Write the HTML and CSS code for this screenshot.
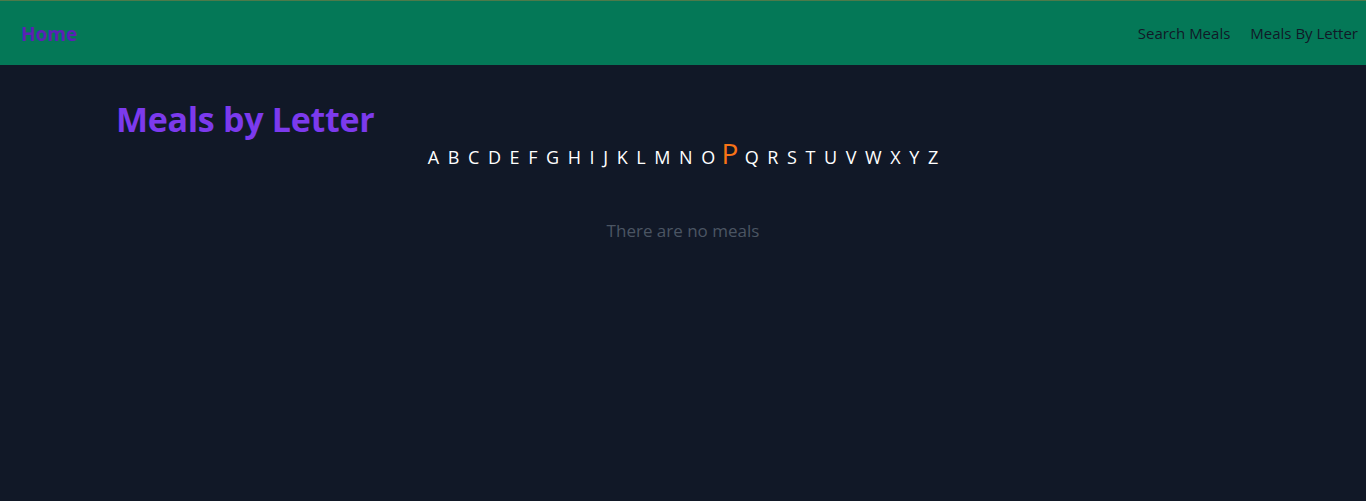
FILE: index.html
```html
<!DOCTYPE html>
<html lang="en">
<head>
<meta charset="utf-8">
<title>Meals by Letter</title>
<link rel="stylesheet" href="styles.css">
</head>
<body>
<header class="topbar">
  <a class="home" href="#">Home</a>
  <nav class="nav">
    <a href="#">Search Meals</a>
    <a href="#">Meals By Letter</a>
  </nav>
</header>
<main class="content">
  <h1 class="title">Meals by Letter</h1>
  <div class="letters">
    <a href="#">A</a><a href="#">B</a><a href="#">C</a><a href="#">D</a><a href="#">E</a><a href="#">F</a><a href="#">G</a><a href="#">H</a><a href="#">I</a><a href="#">J</a><a href="#">K</a><a href="#">L</a><a href="#">M</a><a href="#">N</a><a href="#">O</a><a href="#" class="active">P</a><a href="#">Q</a><a href="#">R</a><a href="#">S</a><a href="#">T</a><a href="#">U</a><a href="#">V</a><a href="#">W</a><a href="#">X</a><a href="#">Y</a><a href="#">Z</a>
  </div>
  <p class="empty">There are no meals</p>
</main>
</body>
</html>
```

FILE: styles.css
```css
html, body {
  margin: 0;
  padding: 0;
}
body {
  background: #111827;
  font-family: "Open Sans", "Noto Sans", sans-serif;
  min-height: 501px;
}
a {
  text-decoration: none;
}
.topbar {
  box-sizing: border-box;
  height: 65px;
  background: #047857;
  border-top: 1px solid #4d7a4a;
  display: flex;
  align-items: center;
  justify-content: space-between;
  padding: 0 8px 0 21px;
}
.home {
  color: #5b21b6;
  font-weight: 700;
  font-size: 19px;
  margin-top: 2px;
}
.nav {
  display: flex;
  gap: 20px;
}
.nav a {
  color: #111827;
  font-size: 15px;
}
.content {
  padding: 0 116px;
}
.title {
  margin: 0;
  padding-top: 33px;
  color: #7c3aed;
  font-size: 34px;
  font-weight: 700;
  line-height: 42px;
  letter-spacing: -0.3px;
}
.letters {
  display: flex;
  justify-content: center;
  align-items: baseline;
  margin-top: -6px;
  height: 38px;
}
.letters a {
  color: #ffffff;
  font-size: 18px;
  padding: 0 4.3px;
}
.letters a.active {
  color: #f97316;
  font-size: 28px;
  padding: 0 2px;
}
.empty {
  margin: 47px 0 0;
  text-align: center;
  color: #4b5563;
  font-size: 17px;
}
```
